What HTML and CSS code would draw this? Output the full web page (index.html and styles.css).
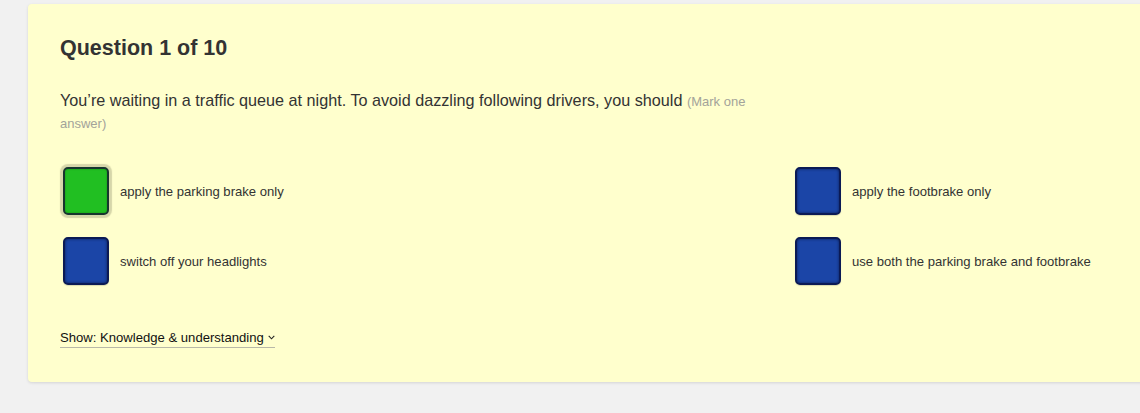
FILE: index.html
```html
<!DOCTYPE html>
<html lang="en">
<head>
<meta charset="utf-8">
<title>Question 1 of 10</title>
<link rel="stylesheet" href="styles.css">
</head>
<body>
<main class="card">
  <h1 class="title">Question 1 of 10</h1>
  <p class="question">You’re waiting in a traffic queue at night. To avoid dazzling following drivers, you should <span class="hint">(Mark one answer)</span></p>
  <div class="options">
    <label class="option">
      <span class="tick tick-selected"></span>
      <span class="label">apply the parking brake only</span>
    </label>
    <label class="option">
      <span class="tick"></span>
      <span class="label">apply the footbrake only</span>
    </label>
    <label class="option">
      <span class="tick"></span>
      <span class="label">switch off your headlights</span>
    </label>
    <label class="option">
      <span class="tick"></span>
      <span class="label">use both the parking brake and footbrake</span>
    </label>
  </div>
  <a class="show" href="#">Show: Knowledge &amp; understanding <svg class="chev" width="7" height="5" viewBox="0 0 7 5"><path d="M0.7 0.8 L3.5 3.8 L6.3 0.8" fill="none" stroke="#222" stroke-width="1.1"/></svg></a>
</main>
</body>
</html>
```

FILE: styles.css
```css
html, body {
  margin: 0;
  padding: 0;
}
body {
  background: #f1f1f1;
  font-family: "Liberation Sans", Arial, Helvetica, sans-serif;
  color: #333;
  overflow: hidden;
  padding: 4px 0 0 28px;
  height: 413px;
  box-sizing: border-box;
}
.card {
  width: 1540px;
  background: #ffffcd;
  border-radius: 4px;
  box-shadow: 0 1px 3px rgba(0, 0, 0, 0.12);
  padding: 32px 0 34px 32px;
  box-sizing: border-box;
}
.title {
  margin: 0;
  font-size: 21.5px;
  line-height: 24px;
  font-weight: bold;
  color: #333;
}
.question {
  margin: 30px 0 0;
  width: 700px;
  font-size: 16.2px;
  line-height: 21px;
  color: #333;
}
.hint {
  font-size: 13px;
  color: #a3a39a;
}
.options {
  display: grid;
  grid-template-columns: 732px 732px;
  row-gap: 22px;
  margin-top: 33px;
}
.option {
  display: flex;
  align-items: center;
  gap: 11px;
  padding-left: 3px;
  font-size: 13.1px;
  color: #333;
}
.tick {
  display: block;
  width: 46px;
  height: 48px;
  box-sizing: border-box;
  border: 2px solid #0b1a55;
  border-radius: 5px;
  background: #1b45a7;
  box-shadow: inset 0 0 3px rgba(0, 0, 20, 0.55), 0 1px 1px rgba(0, 0, 0, 0.15);
  flex: none;
}
.tick-selected {
  background: #21bf22;
  border-color: #17352e;
  box-shadow: inset 0 0 2px rgba(0, 40, 0, 0.35), 0 0 1px 3px rgba(120, 120, 90, 0.3);
}
.show {
  display: inline-block;
  margin-top: 45px;
  font-size: 13.1px;
  line-height: 16px;
  color: #111;
  text-decoration: none;
  padding-bottom: 1px;
  border-bottom: 1px solid #b8b8a8;
}
.chev {
  vertical-align: 2px;
  margin-left: 1px;
}
```
